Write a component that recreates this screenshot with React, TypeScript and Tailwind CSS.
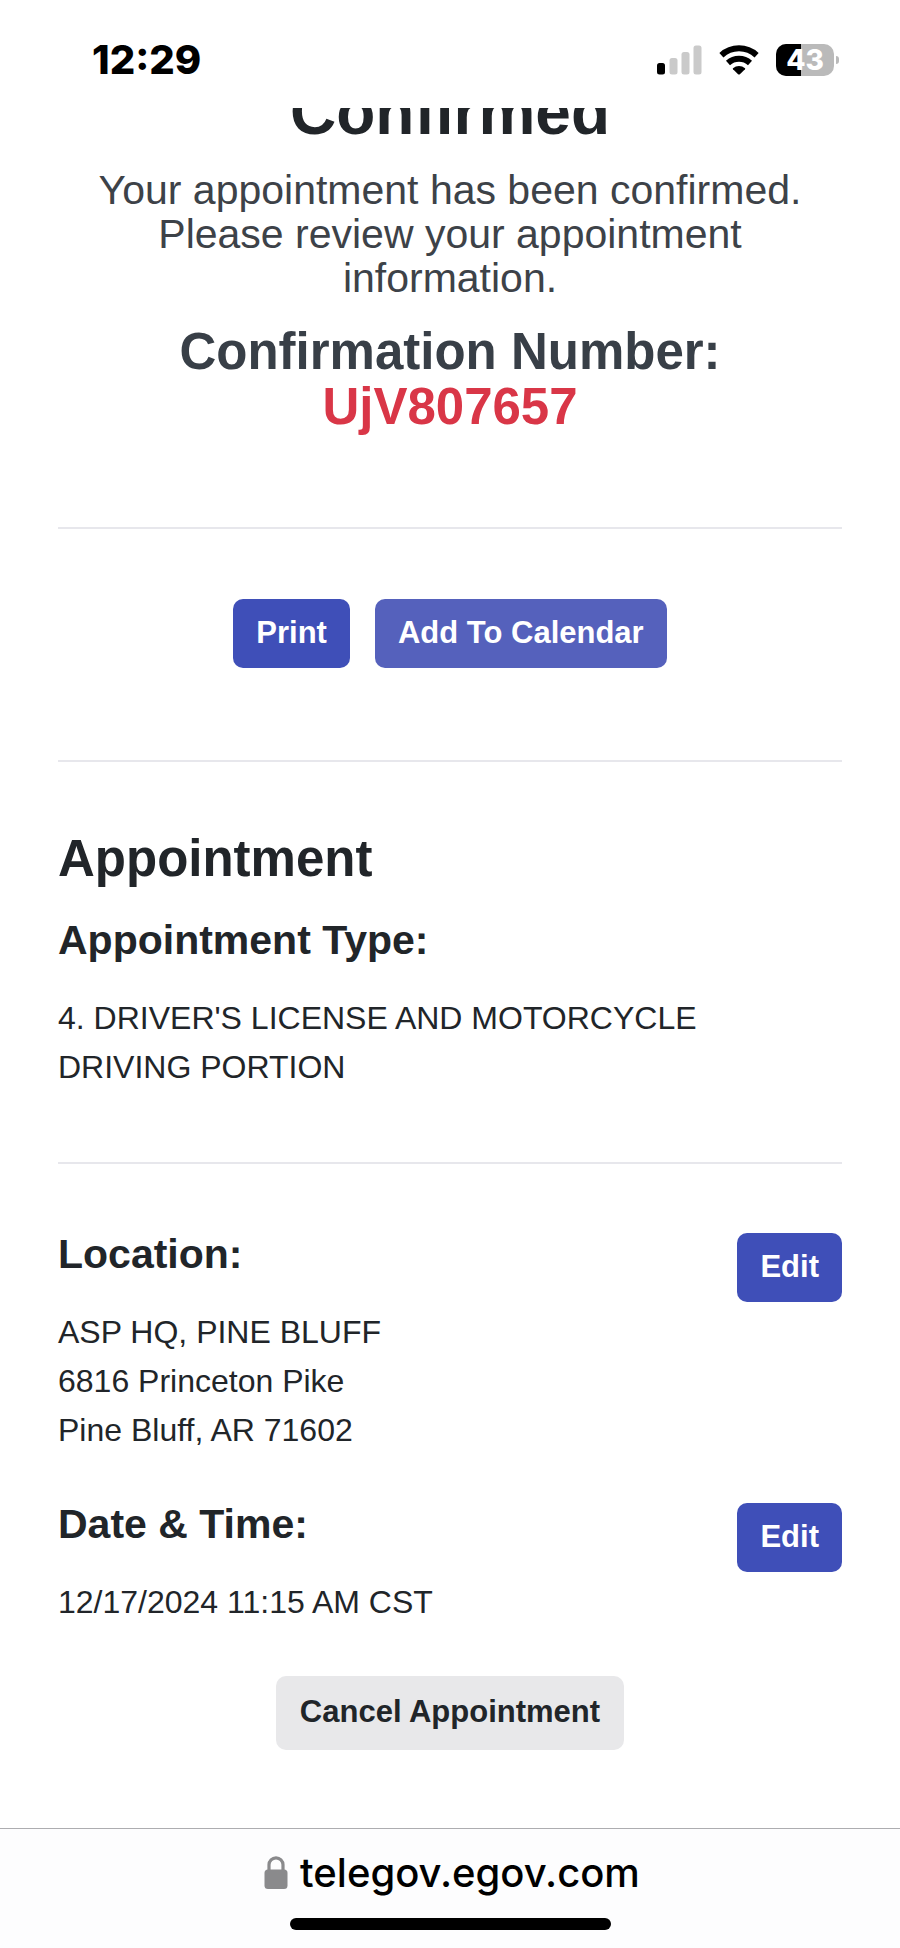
import React from 'react';

const buttonBase = 'rounded-[10px] px-[23px] pt-3 pb-[13px] text-[31px] leading-[44px] font-bold';

function SignalIcon() {
  return (
    <svg width="45" height="30" viewBox="0 0 45 30" aria-hidden="true">
      <rect x="0" y="18" width="8" height="11.5" rx="2.5" fill="#000" />
      <rect x="12.5" y="13" width="8" height="16.5" rx="2.5" fill="#cacaca" />
      <rect x="24.5" y="7" width="8" height="22.5" rx="2.5" fill="#cacaca" />
      <rect x="36.5" y="0.5" width="8" height="29" rx="2.5" fill="#cacaca" />
    </svg>
  );
}

function WifiIcon() {
  return (
    <svg width="40" height="30" viewBox="0 0 40 30" aria-hidden="true">
      <g fill="none" stroke="#000" strokeWidth="6">
        <path d="M2.4 10.2a26 26 0 0 1 35.2 0" />
        <path d="M9 18a16.4 16.4 0 0 1 22 0" />
      </g>
      <path d="M14 23.2a9.6 9.6 0 0 1 12 0q.5.5 0 1l-5.1 5q-.9.8-1.8 0l-5.1-5q-.5-.5 0-1z" fill="#000" />
    </svg>
  );
}

function Battery({ level }: { level: number }) {
  return (
    <div className="flex items-center gap-[2px]">
      <div className="relative flex h-8 w-[58px] items-center justify-center overflow-hidden rounded-[10px] bg-[#bababa]">
        <div className="absolute inset-y-0 left-0 bg-black" style={{ width: `${level}%` }} />
        <span className="relative text-[28px] leading-8 font-extrabold text-white">{level}</span>
      </div>
      <div className="h-2 w-[3px] rounded-r-full bg-[#bababa]" />
    </div>
  );
}

function LockIcon() {
  return (
    <svg width="24" height="34" viewBox="0 0 24 34" aria-hidden="true">
      <path d="M5 16V8.8a7 7 0 0 1 14 0V16" fill="none" stroke="#8a8a8c" strokeWidth="3.2" />
      <rect x="0.5" y="13.5" width="23" height="19.5" rx="3.5" fill="#8a8a8c" />
    </svg>
  );
}

function Detail({ title, lines }: { title: string; lines: string[] }) {
  return (
    <div className="flex items-start justify-between">
      <div>
        <h3 className="text-[41px] leading-[48px] font-bold">{title}</h3>
        <p className="mt-[30px] text-[32px] leading-[49px]">
          {lines.map(line => (
            <span key={line} className="block">{line}</span>
          ))}
        </p>
      </div>
      <button type="button" aria-label={`Edit ${title}`} className={`${buttonBase} mt-[3px] bg-[#3f4fb8] text-white`}>
        Edit
      </button>
    </div>
  );
}

export default function App() {
  return (
    <div className="bg-white text-[#212529] font-['Liberation_Sans',Arial,sans-serif]">
      <header className="flex h-[108px] items-start justify-between pt-11 pr-[61px] pl-[92px] text-black font-['Inter',sans-serif]">
        <span className="text-[40px] leading-8 font-extrabold">12:29</span>
        <div className="flex items-center gap-[17px]">
          <SignalIcon />
          <WifiIcon />
          <Battery level={43} />
        </div>
      </header>

      {/* the page is scrolled a little, so the title sits partly under the status bar */}
      <main className="overflow-hidden px-[58px] pb-[78px]">
        <div className="text-center">
          <h1 className="-mt-8 text-[64px] leading-[72px] font-bold">Confirmed</h1>
          <p className="mt-5 text-[41px] leading-[44px] text-[#3d4248]">
            Your appointment has been confirmed. Please review your appointment information.
          </p>
          <h2 className="mt-6 text-[51px] leading-[55px] font-bold text-[#383f47]">
            Confirmation Number:
            <span className="block text-[#d93647]">UjV807657</span>
          </h2>
        </div>

        <hr className="mt-[93px] border-t-2 border-[#e7e7ec]" />
        <div className="mt-[70px] flex justify-center gap-[25px]">
          <button type="button" className={`${buttonBase} bg-[#3f4fb8] text-white`}>Print</button>
          <button type="button" className={`${buttonBase} bg-[#5561bc] text-white`}>Add To Calendar</button>
        </div>
        <hr className="mt-[92px] border-t-2 border-[#e7e7ec]" />

        <h2 className="mt-[67px] text-[51px] leading-[60px] font-bold">Appointment</h2>
        <h3 className="mt-[27px] text-[41px] leading-[48px] font-bold">Appointment Type:</h3>
        <p className="mt-[30px] pr-10 text-[32px] leading-[49px]">
          4. DRIVER'S LICENSE AND MOTORCYCLE DRIVING PORTION
        </p>
        <hr className="mt-[70px] border-t-2 border-[#e7e7ec]" />

        <div className="mt-[66px] space-y-[45px]">
          <Detail title="Location:" lines={['ASP HQ, PINE BLUFF', '6816 Princeton Pike', 'Pine Bluff, AR 71602']} />
          <Detail title="Date &amp; Time:" lines={['12/17/2024 11:15 AM CST']} />
        </div>

        <div className="mt-[49px] flex justify-center">
          <button type="button" className="rounded-[10px] bg-[#e8e8ea] px-6 pt-[14px] pb-4 text-[31px] leading-[44px] font-bold">
            Cancel Appointment
          </button>
        </div>
      </main>

      <footer className="border-t border-[#adadb0] bg-[#fdfdfe] pt-5 pb-[18px]">
        <div className="flex items-center justify-center gap-3 pl-1">
          <LockIcon />
          <a href="https://telegov.egov.com" className="text-[40px] leading-[48px] font-medium text-black font-['Inter',sans-serif]">
            telegov.egov.com
          </a>
        </div>
        <div className="mx-auto mt-[21px] h-3 w-[321px] rounded-full bg-black" />
      </footer>
    </div>
  );
}
